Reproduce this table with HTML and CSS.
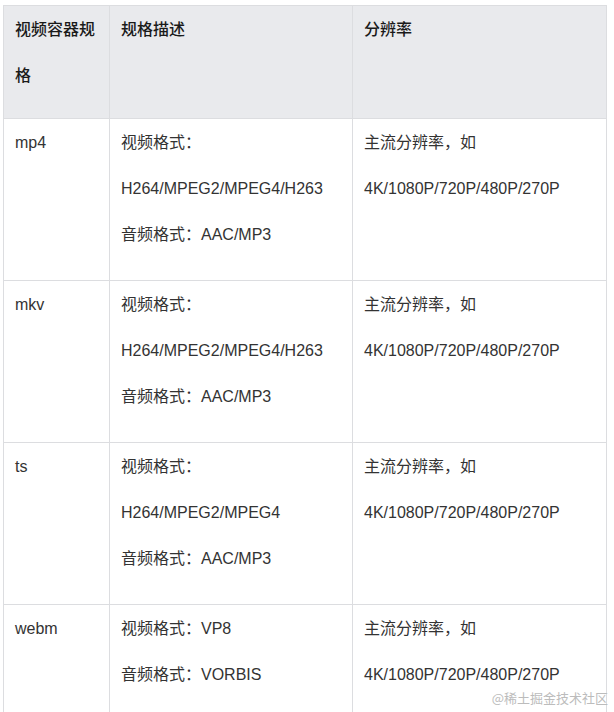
FILE: index.html
```html
<!DOCTYPE html>
<html lang="zh-CN">
<head>
<meta charset="utf-8">
<title>视频容器规格</title>
<link rel="stylesheet" href="styles.css">
</head>
<body>
<div class="page">
  <table class="spec">
    <colgroup>
      <col class="c1">
      <col class="c2">
      <col class="c3">
    </colgroup>
    <thead>
      <tr>
        <th>视频容器规格</th>
        <th>规格描述</th>
        <th>分辨率</th>
      </tr>
    </thead>
    <tbody>
      <tr>
        <td>mp4</td>
        <td>视频格式：<br>H264/MPEG2/MPEG4/H263<br>音频格式：AAC/MP3</td>
        <td>主流分辨率，如<br>4K/1080P/720P/480P/270P</td>
      </tr>
      <tr>
        <td>mkv</td>
        <td>视频格式：<br>H264/MPEG2/MPEG4/H263<br>音频格式：AAC/MP3</td>
        <td>主流分辨率，如<br>4K/1080P/720P/480P/270P</td>
      </tr>
      <tr>
        <td>ts</td>
        <td>视频格式：<br>H264/MPEG2/MPEG4<br>音频格式：AAC/MP3</td>
        <td>主流分辨率，如<br>4K/1080P/720P/480P/270P</td>
      </tr>
      <tr>
        <td>webm</td>
        <td>视频格式：VP8<br>音频格式：VORBIS</td>
        <td>主流分辨率，如<br>4K/1080P/720P/480P/270P</td>
      </tr>
    </tbody>
  </table>
  <div class="watermark">@稀土掘金技术社区</div>
</div>
</body>
</html>
```
FILE: styles.css
```css
html, body {
  margin: 0;
  padding: 0;
  background: #ffffff;
}
body {
  width: 614px;
  height: 712px;
  overflow: hidden;
  font-family: "Liberation Sans", "Noto Sans CJK SC", sans-serif;
  font-size: 16px;
  color: #333333;
}
.page {
  position: relative;
  width: 614px;
  height: 712px;
  padding: 5px 0 0 3px;
  box-sizing: border-box;
}
.spec {
  border-collapse: collapse;
  table-layout: fixed;
  width: 603px;
}
.c1 { width: 106px; }
.c2 { width: 243px; }
.c3 { width: 254px; }
.spec th,
.spec td {
  border: 1px solid #dcdde0;
  vertical-align: top;
  text-align: left;
  line-height: 46px;
  padding: 1px 11px 22px 11px;
  word-break: break-all;
}
.spec th {
  background: #e9eaed;
  color: #1a1a1a;
  font-weight: 500;
  padding-bottom: 19px;
}
.watermark {
  position: absolute;
  right: 6px;
  top: 689px;
  font-family: "Noto Sans CJK SC", sans-serif;
  font-size: 13px;
  line-height: 18px;
  color: #bcbcbc;
}
```
